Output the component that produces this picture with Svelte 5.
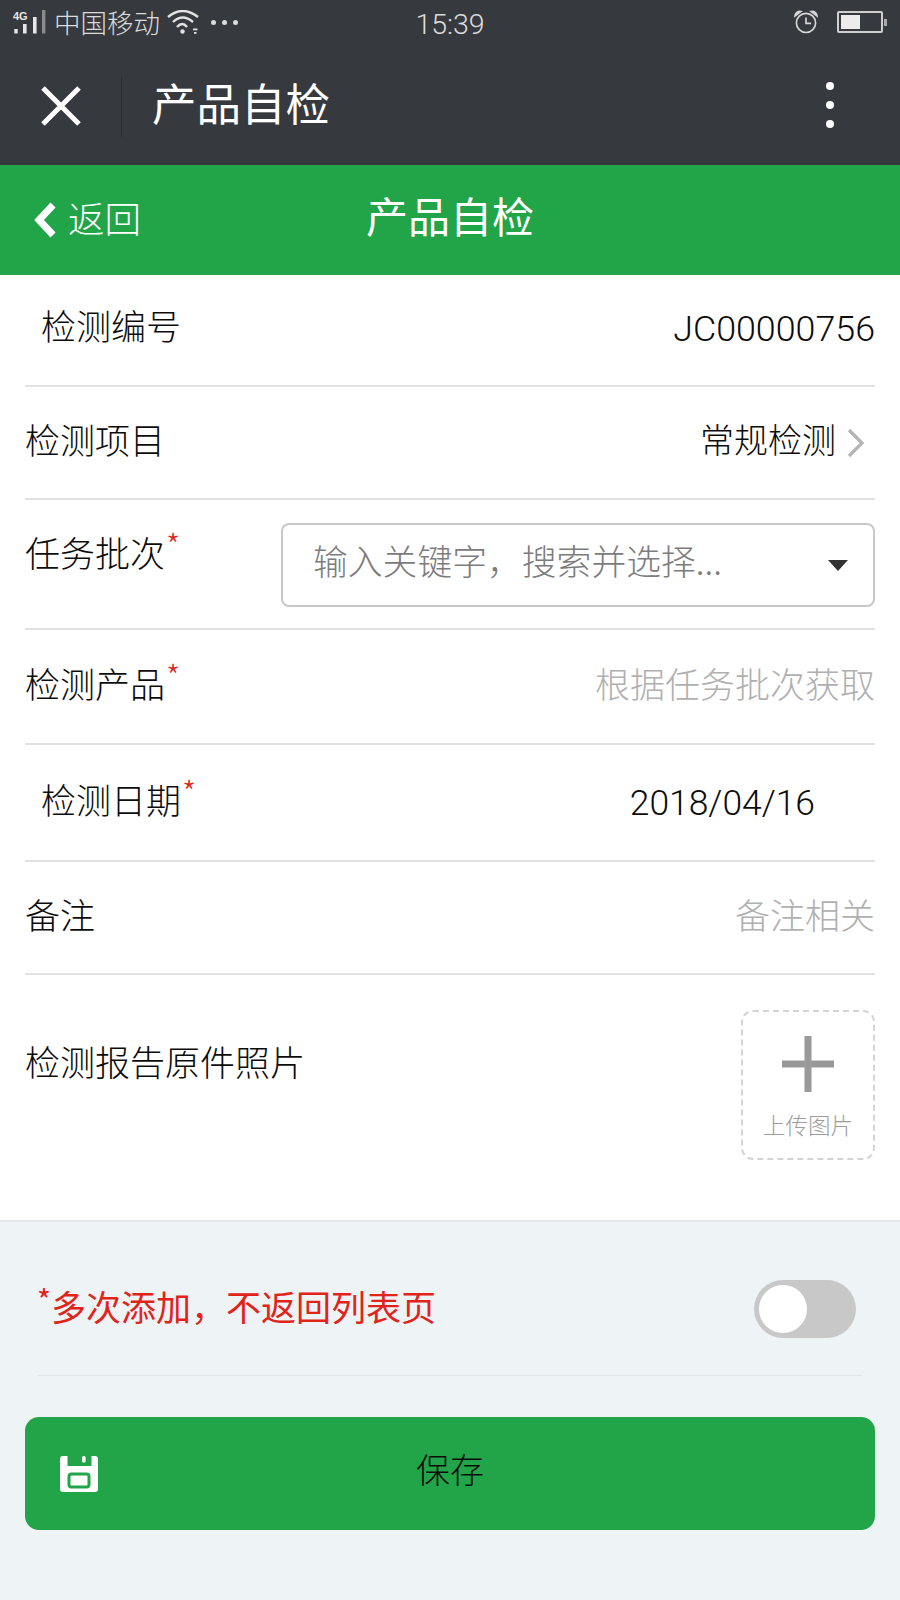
<script>
  let again = false;
</script>

<div class="page">
  <div class="status">
    <div class="status-left">
      <svg class="signal" width="34" height="24" viewBox="0 0 34 24">
        <text x="0" y="10" class="net">4G</text>
        <rect x="1.3" y="19" width="3.4" height="4.5" fill="#e6e6e6" />
        <rect x="10" y="14" width="3.6" height="9.5" fill="#e6e6e6" />
        <rect x="20" y="7" width="3.6" height="16.5" fill="#e6e6e6" />
        <rect x="29" y="0" width="3.4" height="23.5" fill="#8a8b8d" />
      </svg>
      <span class="carrier">中国移动</span>
      <svg width="32" height="24" viewBox="0 0 32 24" fill="none" stroke="#e2e2e2" stroke-width="2.4">
        <path d="M1 7 Q15.5 -5 31 7" />
        <path d="M6 12 Q15.5 3 26 12" />
        <path d="M10 17 Q15.5 11 20 17" />
        <circle cx="15.5" cy="21.5" r="2.2" fill="#e2e2e2" stroke="none" />
        <rect x="26" y="18.5" width="4.5" height="1.8" fill="#e2e2e2" stroke="none" />
        <rect x="27" y="22" width="2.5" height="1.8" fill="#e2e2e2" stroke="none" />
      </svg>
      <span class="dots"><i></i><i></i><i></i></span>
    </div>
    <div class="time">15:39</div>
    <div class="status-right">
      <svg width="24" height="24" viewBox="0 0 26 26" fill="none" stroke="#d6d6d6" stroke-width="1.8">
        <circle cx="13" cy="14" r="10.4" />
        <path d="M13 8 V14.5 H18.5" />
        <path d="M1 6.5 C1.4 3 4 1.2 7.4 1.6 Z" fill="#d6d6d6" />
        <path d="M25 6.5 C24.6 3 22 1.2 18.6 1.6 Z" fill="#d6d6d6" />
      </svg>
      <div class="battery"><div class="level" style="width: 50%"></div></div>
      <div class="nub"></div>
    </div>
  </div>

  <div class="wx-nav">
    <svg class="close" width="40" height="40" viewBox="0 0 40 40">
      <path d="M2 2 L38 38 M38 2 L2 38" stroke="#fff" stroke-width="5" fill="none" />
    </svg>
    <div class="sep"></div>
    <div class="wx-title">产品自检</div>
    <div class="more"><i></i><i></i><i></i></div>
  </div>

  <div class="header">
    <div class="back">
      <svg width="24" height="36" viewBox="0 0 24 36">
        <path d="M20 3 L6 18 L20 33" fill="none" stroke="#fff" stroke-width="7" />
      </svg>
      <span>返回</span>
    </div>
    <div class="header-title">产品自检</div>
  </div>

  <div class="form">
    <div class="row r1 indent">
      <span class="label">检测编号</span>
      <span class="value code">JC00000756</span>
    </div>
    <div class="row r2">
      <span class="label">检测项目</span>
      <span class="value">
        <span class="value-text">常规检测</span>
        <svg class="chev" width="18" height="30" viewBox="0 0 18 30">
          <path d="M2 2 L15 15 L2 28" fill="none" stroke="#b4b4b4" stroke-width="3.2" />
        </svg>
      </span>
    </div>
    <div class="row r3">
      <span class="label top">任务批次<em>*</em></span>
      <div class="select">
        <span>输入关键字，搜索并选择...</span>
        <b class="caret"></b>
      </div>
    </div>
    <div class="row r4">
      <span class="label">检测产品<em>*</em></span>
      <span class="hint">根据任务批次获取</span>
    </div>
    <div class="row r5 indent">
      <span class="label">检测日期<em>*</em></span>
      <span class="value date">2018/04/16</span>
    </div>
    <div class="row r6">
      <span class="label">备注</span>
      <span class="hint">备注相关</span>
    </div>
    <div class="row r7">
      <span class="label">检测报告原件照片</span>
      <div class="upload">
        <svg width="52" height="56" viewBox="0 0 52 56">
          <rect x="0" y="24.5" width="52" height="7" fill="#999" />
          <rect x="22.5" y="0" width="7" height="56" fill="#999" />
        </svg>
        <span>上传图片</span>
      </div>
    </div>
  </div>

  <div class="footer">
    <div class="again">
      <span class="again-text"><sup>*</sup>多次添加，不返回列表页</span>
      <button class="switch" class:on={again} aria-label="多次添加" onclick={() => (again = !again)}>
        <span class="knob"></span>
      </button>
    </div>
    <button class="save">
      <svg class="save-icon" width="38" height="36" viewBox="0 0 38 36">
        <path fill="#fff" d="M3 0 H7.5 V10 H31.5 V0 H35 Q38 0 38 3 V33 Q38 36 35 36 H3 Q0 36 0 33 V3 Q0 0 3 0 Z" />
        <rect x="22" y="0" width="3.6" height="6.5" rx="1.5" fill="#fff" />
        <rect x="9" y="18" width="20" height="13" rx="2.5" fill="#fff" stroke="#21a548" stroke-width="3" />
      </svg>
      <span>保存</span>
    </button>
  </div>
</div>

<style>
  :global(body) {
    margin: 0;
    background: #eef3f6;
  }
  .page {
    width: 900px;
    height: 1600px;
    overflow: hidden;
    background: #eef3f6;
    font-family: "Noto Sans CJK SC", "Liberation Sans", sans-serif;
    font-weight: 300;
    color: #0c0c0c;
  }
  .status {
    height: 50px;
    box-sizing: border-box;
    background: #36393d;
    display: grid;
    grid-template-columns: 1fr auto 1fr;
    align-items: center;
    padding: 0 13px 6px;
    color: #dcdcdc;
  }
  .status-left {
    display: flex;
    align-items: center;
    gap: 7px;
  }
  .net {
    font-family: "Liberation Sans", sans-serif;
    font-size: 11px;
    font-weight: bold;
    fill: #e6e6e6;
  }
  .carrier {
    font-size: 26.5px;
    line-height: 30px;
  }
  .dots {
    display: flex;
    gap: 6px;
    margin-left: 5px;
  }
  .dots i {
    width: 5px;
    height: 5px;
    border-radius: 50%;
    background: #dcdcdc;
  }
  .time {
    font-family: Roboto, sans-serif;
    font-size: 28.5px;
    font-weight: 300;
    padding-top: 5px;
  }
  .status-right {
    display: flex;
    align-items: center;
    justify-content: flex-end;
  }
  .battery {
    width: 46px;
    height: 22px;
    box-sizing: border-box;
    margin-left: 19px;
    border: 2px solid #cfcfcf;
    border-radius: 2px;
    padding: 2px;
  }
  .level {
    height: 100%;
    background: #ececec;
  }
  .nub {
    width: 3px;
    height: 7px;
    margin-left: 1px;
    background: #aaa;
  }
  .wx-nav {
    height: 115px;
    background: #36393d;
    display: flex;
    align-items: center;
    color: #fff;
  }
  .close {
    margin-left: 41px;
    margin-bottom: 3px;
  }
  .sep {
    width: 1px;
    height: 60px;
    background: #2a2c2f;
    margin-left: 40px;
    margin-bottom: 2px;
  }
  .wx-title {
    font-size: 44.5px;
    font-weight: 400;
    margin-left: 30px;
    line-height: 60px;
    padding-bottom: 12px;
  }
  .more {
    margin-left: auto;
    margin-right: 66px;
    padding-bottom: 6px;
    display: flex;
    flex-direction: column;
    gap: 11px;
  }
  .more i {
    width: 8px;
    height: 8px;
    border-radius: 50%;
    background: #fff;
  }
  .header {
    height: 110px;
    background: #21a548;
    color: #fff;
    display: grid;
    grid-template-columns: 1fr auto 1fr;
    align-items: center;
  }
  .back {
    display: flex;
    align-items: center;
    font-size: 36.5px;
    padding-left: 33px;
    gap: 11px;
  }
  .back span {
    padding-bottom: 6px;
  }
  .header-title {
    font-size: 42px;
    font-weight: 400;
    line-height: 60px;
    padding-bottom: 10px;
  }
  .form {
    background: #fff;
    height: 947px;
    padding: 0 25px;
    border-bottom: 2px solid #e2e6e8;
    box-sizing: border-box;
  }
  .row {
    display: flex;
    justify-content: space-between;
    align-items: center;
    border-bottom: 2px solid #e2e2e2;
    box-sizing: border-box;
  }
  .label {
    font-size: 35px;
    line-height: 40px;
    padding-bottom: 8px;
    white-space: nowrap;
  }
  .label em {
    color: #e2231a;
    font-style: normal;
    font-size: 32px;
    vertical-align: 9px;
    line-height: 0;
    margin-left: 1px;
  }
  .indent {
    padding-left: 16px;
  }
  .value {
    display: flex;
    align-items: center;
    font-size: 34px;
    line-height: 40px;
  }
  .value-text {
    padding-bottom: 8px;
  }
  .chev {
    margin-left: 11px;
    margin-right: 10px;
  }
  .hint {
    font-size: 35px;
    color: #b0b0b0;
    line-height: 40px;
    padding-bottom: 8px;
  }
  .r1 {
    height: 112px;
    padding-bottom: 2px;
  }
  .code {
    font-family: Roboto, sans-serif;
    font-size: 35.8px;
    font-weight: 300;
  }
  .r2 {
    height: 113px;
  }
  .r3 {
    height: 130px;
    align-items: flex-start;
    padding-top: 23px;
  }
  .label.top {
    margin-top: 9px;
  }
  .select {
    width: 594px;
    height: 84px;
    border: 2px solid #c8c8c8;
    border-radius: 8px;
    box-sizing: border-box;
    display: flex;
    align-items: center;
    justify-content: space-between;
    padding: 0 25px 0 30px;
    font-size: 34.8px;
    color: #7c7c7c;
  }
  .select span {
    padding-bottom: 10px;
  }
  .caret {
    width: 0;
    height: 0;
    border-left: 10px solid transparent;
    border-right: 10px solid transparent;
    border-top: 11px solid #333;
  }
  .r4 {
    height: 115px;
  }
  .r5 {
    height: 117px;
  }
  .date {
    font-family: Roboto, sans-serif;
    font-size: 35.4px;
    font-weight: 300;
    margin-right: 60px;
  }
  .r6 {
    height: 113px;
  }
  .r7 {
    border-bottom: 0;
    align-items: flex-start;
    padding-top: 35px;
  }
  .r7 .label {
    margin-top: 31px;
  }
  .upload {
    width: 134px;
    height: 150px;
    box-sizing: border-box;
    border: 2px dashed #d4d4d4;
    border-radius: 12px;
    display: flex;
    flex-direction: column;
    align-items: center;
    padding-top: 24px;
    font-size: 22.5px;
    color: #9c9c9c;
  }
  .upload span {
    margin-top: 17px;
    line-height: 30px;
  }
  .footer {
    padding: 0 25px;
  }
  .again {
    height: 154px;
    margin: 0 12px;
    padding-top: 20px;
    display: flex;
    align-items: center;
    justify-content: space-between;
    border-bottom: 1px solid #e3e7ea;
    box-sizing: border-box;
  }
  .again-text {
    font-size: 35px;
    font-weight: 400;
    color: #e2231a;
    line-height: 40px;
    padding-bottom: 6px;
  }
  .again-text sup {
    font-size: 30px;
    line-height: 0;
    vertical-align: 9px;
  }
  .switch {
    width: 102px;
    height: 58px;
    border: 0;
    border-radius: 29px;
    background: #c8c8c8;
    padding: 5px;
    margin-right: 7px;
    display: flex;
  }
  .switch.on {
    background: #21a548;
    justify-content: flex-end;
  }
  .knob {
    width: 48px;
    height: 48px;
    border-radius: 50%;
    background: #fff;
  }
  .save {
    width: 100%;
    height: 113px;
    margin-top: 41px;
    border: 0;
    border-radius: 14px;
    background: #21a548;
    color: #0c0c0c;
    font-family: inherit;
    font-weight: 300;
    font-size: 34px;
    display: grid;
    grid-template-columns: 1fr auto 1fr;
    align-items: center;
    padding: 0 35px;
  }
  .save span {
    padding-bottom: 10px;
  }
  .save-icon {
    justify-self: start;
  }
</style>
